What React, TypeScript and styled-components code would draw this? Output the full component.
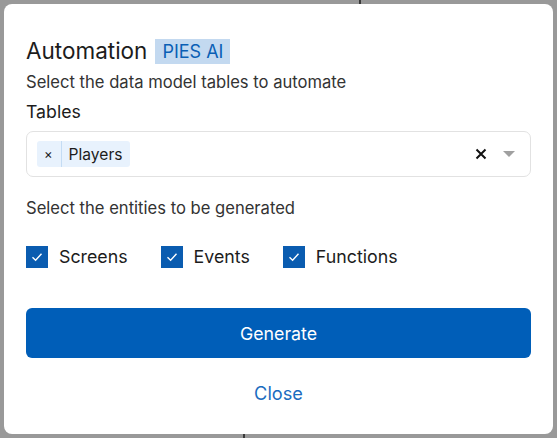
import React from "react"
import styled, { createGlobalStyle } from "styled-components"

const GlobalStyle = createGlobalStyle`
  html, body {
    margin: 0;
    padding: 0;
    background: #999999;
    font-family: Inter, "Noto Sans", "Liberation Sans", sans-serif;
  }
`

const Backdrop = styled.div`
  position: relative;
  width: 557px;
  height: 438px;
  padding: 4px;
  box-sizing: border-box;
  overflow: hidden;
`

const BackLine = styled.div<{ left: number; top: number; height: number }>`
  position: absolute;
  left: ${({ left }) => left}px;
  top: ${({ top }) => top}px;
  width: 2px;
  height: ${({ height }) => height}px;
  background: #3a3a3a;
`

const Dialog = styled.div`
  position: relative;
  width: 549px;
  height: 430px;
  box-sizing: border-box;
  background: #ffffff;
  border-radius: 8px;
  padding: 34px 22px 0 22px;
  display: flex;
  flex-direction: column;
`

const TitleRow = styled.div`
  display: flex;
  align-items: center;
  gap: 8px;
  height: 26px;
`

const Title = styled.h2`
  margin: 0;
  font-size: 22.5px;
  font-weight: 400;
  color: #1c1c1c;
  line-height: 26px;
`

const Badge = styled.span`
  background: #c3d9f0;
  color: #0a5fb5;
  font-size: 18px;
  line-height: 25px;
  padding: 0 7px;
`

const Hint = styled.p<{ top: number }>`
  margin: ${({ top }) => top}px 0 0;
  font-size: 16.6px;
  line-height: 20px;
  color: #333333;
`

const Label = styled.div`
  margin-top: 9px;
  font-size: 17.7px;
  line-height: 22px;
  color: #1c1c1c;
`

const Select = styled.div`
  margin-top: 8px;
  height: 46px;
  box-sizing: border-box;
  border: 1px solid #e2e2e2;
  border-radius: 7px;
  display: flex;
  align-items: center;
  padding: 0 7px 0 10px;
`

const Chip = styled.div`
  display: flex;
  align-items: stretch;
  height: 26px;
  background: #e8f2fd;
  border-radius: 3px;
  font-size: 15.6px;
  color: #1c1c1c;
`

const ChipRemove = styled.span`
  display: flex;
  align-items: center;
  padding: 0 8px 0 7px;
  font-size: 13px;
  border-right: 1px solid #c4dcf4;
`

const ChipText = styled.span`
  display: flex;
  align-items: center;
  padding: 0 7px;
`

const Spacer = styled.div`
  flex: 1;
`

const Indicator = styled.span`
  display: flex;
  align-items: center;
  justify-content: center;
  width: 28px;
`

const Checks = styled.div`
  margin-top: 28px;
  display: flex;
  gap: 33px;
`

const CheckItem = styled.label`
  display: flex;
  align-items: center;
  gap: 11px;
  font-size: 17.8px;
  color: #1c1c1c;
  line-height: 22px;
`

const Box = styled.span`
  width: 22px;
  height: 22px;
  background: #0a5cb0;
  display: flex;
  align-items: center;
  justify-content: center;
`

const Primary = styled.button`
  margin-top: 40px;
  height: 50px;
  border: none;
  border-radius: 6px;
  background: #005eb8;
  color: #ffffff;
  font-family: inherit;
  font-size: 17.8px;
  cursor: pointer;
`

const Link = styled.button`
  margin-top: 23px;
  align-self: center;
  border: none;
  background: none;
  color: #1a6cbf;
  font-family: inherit;
  font-size: 18.2px;
  line-height: 24px;
  padding: 0;
  cursor: pointer;
`

const Tick = () => (
  <svg width="14" height="14" viewBox="0 0 14 14">
    <path d="M2.5 7.3 L5.6 10.2 L11.5 3.8" fill="none" stroke="#fff" strokeWidth="1.4" />
  </svg>
)

const entities = ["Screens", "Events", "Functions"]

const App = () => (
  <>
    <GlobalStyle />
    <Backdrop>
      <BackLine left={359} top={0} height={6} />
      <BackLine left={243} top={432} height={6} />
      <Dialog>
        <TitleRow>
          <Title>Automation</Title>
          <Badge>PIES AI</Badge>
        </TitleRow>
        <Hint top={8}>Select the data model tables to automate</Hint>
        <Label>Tables</Label>
        <Select>
          <Chip>
            <ChipRemove>×</ChipRemove>
            <ChipText>Players</ChipText>
          </Chip>
          <Spacer />
          <Indicator>
            <svg width="12" height="12" viewBox="0 0 12 12">
              <path d="M1.5 1.5 L10.5 10.5 M10.5 1.5 L1.5 10.5" stroke="#111" strokeWidth="2" />
            </svg>
          </Indicator>
          <Indicator>
            <svg width="12" height="7" viewBox="0 0 12 7">
              <path d="M0 0 H12 L6 6 Z" fill="#a0a0a0" />
            </svg>
          </Indicator>
        </Select>
        <Hint top={21}>Select the entities to be generated</Hint>
        <Checks>
          {entities.map(name => (
            <CheckItem key={name}>
              <Box>
                <Tick />
              </Box>
              {name}
            </CheckItem>
          ))}
        </Checks>
        <Primary>Generate</Primary>
        <Link>Close</Link>
      </Dialog>
    </Backdrop>
  </>
)

export default App
